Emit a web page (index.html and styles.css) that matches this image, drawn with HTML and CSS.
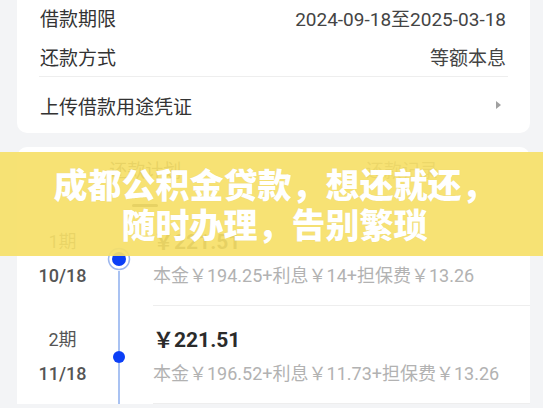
FILE: index.html
```html
<!DOCTYPE html>
<html lang="zh-CN">
<head>
    <meta charset="UTF-8">
    <meta name="viewport" content="width=device-width, initial-scale=1.0">
    <title>成都公积金贷款</title>
    <link rel="stylesheet" href="styles.css">
</head>
<body>
    <div class="card info-card">
        <div class="info-row">
            <span class="label">借款期限</span>
            <span class="value">2024-09-18至2025-03-18</span>
        </div>
        <div class="info-row">
            <span class="label">还款方式</span>
            <span class="value">等额本息</span>
        </div>
        <div class="info-row link-row">
            <span class="label">上传借款用途凭证</span>
            <span class="arrow"></span>
        </div>
    </div>

    <div class="card plan-card">
        <div class="tabs">
            <div class="tab active">还款计划</div>
            <div class="tab">还款记录</div>
        </div>

        <div class="plan-row">
            <div class="when">
                <span class="term">1期</span>
                <span class="date">10/18</span>
            </div>
            <div class="tl">
                <span class="seg seg-top first"></span>
                <svg class="ring-dot" width="24" height="24" viewBox="0 0 24 24">
                    <circle cx="12" cy="12" r="10.5" fill="#fff" stroke="#9db7ef" stroke-width="1.5"/>
                    <circle cx="12" cy="12" r="7" fill="#0b3ff7"/>
                </svg>
                <span class="seg seg-bottom"></span>
            </div>
            <div class="detail">
                <span class="amount">￥221.51</span>
                <span class="parts">本金￥194.25+利息￥14+担保费￥13.26</span>
            </div>
        </div>

        <div class="plan-row">
            <div class="when">
                <span class="term">2期</span>
                <span class="date">11/18</span>
            </div>
            <div class="tl">
                <span class="seg seg-top"></span>
                <span class="dot"></span>
                <span class="seg seg-bottom"></span>
            </div>
            <div class="detail">
                <span class="amount">￥221.51</span>
                <span class="parts">本金￥196.52+利息￥11.73+担保费￥13.26</span>
            </div>
        </div>
    </div>

    <div class="banner">成都公积金贷款，想还就还，<br>随时办理，告别繁琐</div>
</body>
</html>
```

FILE: styles.css
```css
html, body {
    margin: 0;
    padding: 0;
    width: 543px;
    height: 408px;
    overflow: hidden;
}

body {
    position: relative;
    background: #f3f4f6;
    font-family: Roboto, "Noto Sans CJK SC", sans-serif;
    color: #333;
}

.card {
    background: #fff;
    margin: 0 13px 0 17px;
}

/* top info card */
.info-card {
    margin-top: -2px;
    border-radius: 0 0 10px 10px;
    padding: 0 24px 0 23px;
}

.info-row {
    display: flex;
    align-items: center;
    justify-content: space-between;
    height: 39px;
    font-size: 19px;
}

.info-row .label {
    color: #333;
}

.info-row .value {
    color: #444;
}

.link-row {
    height: 56px;
    border-top: 1px solid #eeeeee;
    margin: 0 -2px 0 -1px;
    padding: 0 2px 0 1px;
}

.arrow {
    width: 0;
    height: 0;
    margin-right: 5px;
    border-top: 4px solid transparent;
    border-bottom: 4px solid transparent;
    border-left: 5px solid #a0a0a0;
}

/* repayment plan card */
.plan-card {
    margin-top: 14px;
    border-radius: 10px 10px 0 0;
}

.tabs {
    display: flex;
    height: 61px;
}

.tab {
    flex: 1;
    display: flex;
    flex-direction: column;
    align-items: center;
    padding-top: 12px;
    font-size: 18px;
    line-height: 24px;
    color: #777;
}

.tab.active {
    color: #444;
}

.tab.active::after {
    content: '';
    width: 26px;
    height: 3px;
    margin-top: auto;
    margin-bottom: 1px;
    border-radius: 2px;
    background: #333;
}

.plan-row {
    display: grid;
    grid-template-columns: 91px 22px 1fr;
}

.when {
    display: flex;
    flex-direction: column;
    align-items: center;
    gap: 10px;
    padding-top: 22px;
    font-size: 18px;
    line-height: 24px;
    color: #555;
}

.when .date {
    font-weight: 500;
}

.tl {
    display: flex;
    flex-direction: column;
    align-items: center;
}

.seg {
    width: 2px;
    background: #a9c2f2;
}

.seg-top {
    height: 45px;
}

.seg-top.first {
    height: 39px;
    background: transparent;
}

.seg-bottom {
    flex: 1;
}

.ring-dot {
    display: block;
}

.dot {
    width: 12px;
    height: 12px;
    border-radius: 50%;
    background: #0b3ff7;
}

.detail {
    display: flex;
    flex-direction: column;
    gap: 10px;
    margin-left: 23px;
    padding: 22px 0 17px;
    border-bottom: 1px solid #eeeeee;
    line-height: 24px;
}

.amount {
    font-size: 21px;
    font-weight: 700;
    color: #2b2b2b;
}

.parts {
    font-size: 18px;
    color: #b2b2b2;
}

/* yellow title band over the page */
.banner {
    position: absolute;
    left: 0;
    right: 0;
    top: 152px;
    height: 104px;
    box-sizing: border-box;
    padding: 12px 0 0 6px;
    background: rgba(246, 223, 104, 0.92);
    color: #fff;
    font-family: "Noto Sans CJK SC", sans-serif;
    font-size: 34px;
    font-weight: 900;
    line-height: 40px;
    text-align: center;
    text-shadow: 0 0 1px rgba(0, 0, 0, 0.08);
}
```
